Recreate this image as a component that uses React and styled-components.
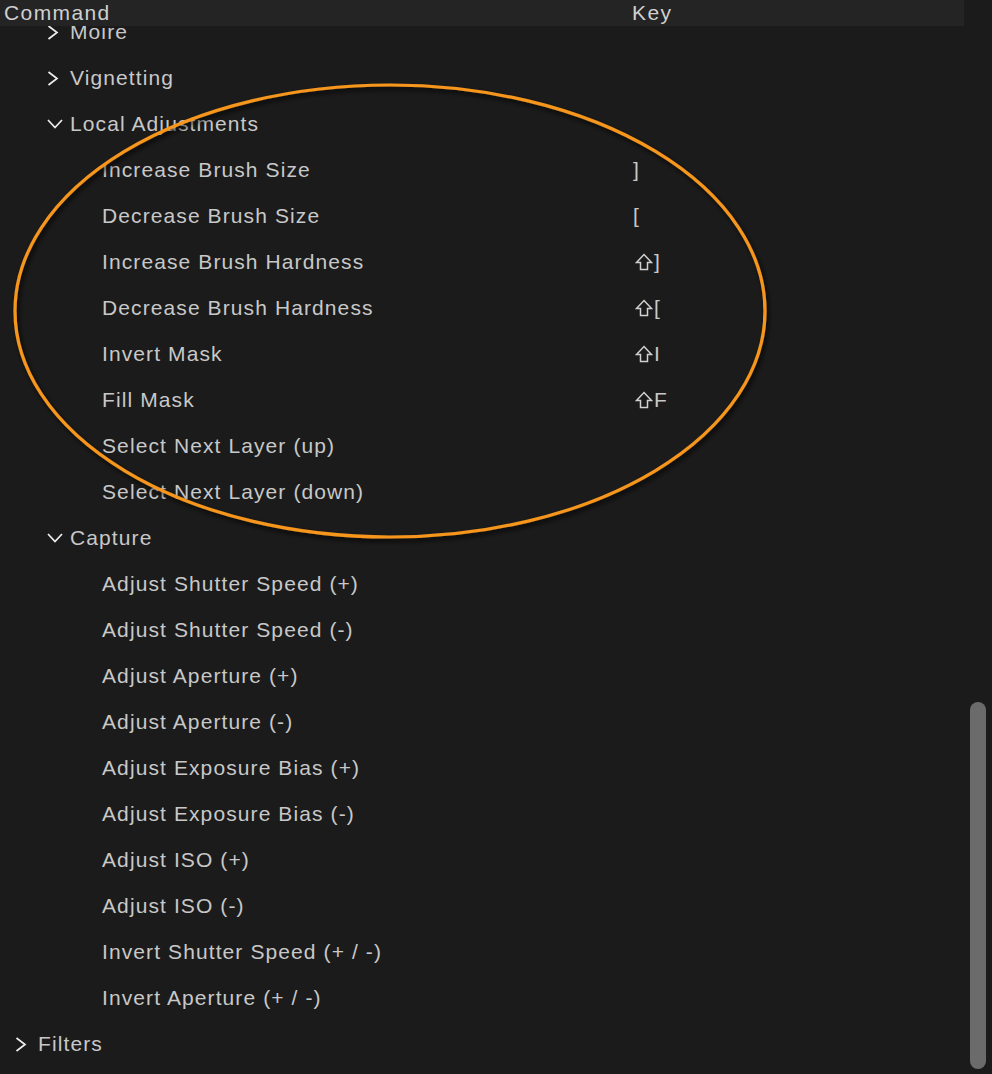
import styled, { createGlobalStyle } from 'styled-components';

const GlobalStyle = createGlobalStyle`
  html, body {
    margin: 0;
    padding: 0;
    background: #1b1b1b;
  }
  body {
    font-family: "Liberation Sans", Arial, sans-serif;
  }
`;

const Viewport = styled.div`
  position: relative;
  width: 992px;
  height: 1074px;
  overflow: hidden;
  background: #1b1b1b;
`;

// sticky column header, drawn over the scrolled list
const Header = styled.div`
  position: absolute;
  top: 0;
  left: 0;
  width: 964px;
  height: 26px;
  z-index: 2;
  display: grid;
  grid-template-columns: 632px 1fr;
  align-items: center;
  background: #242424;
  color: #d0d0d0;
  font-size: 21px;
  letter-spacing: 1.4px;
`;

const HeaderCell = styled.div`
  padding-left: ${(p) => p.pad || 0}px;
  line-height: 26px;
  margin-top: -1px;
`;

const List = styled.div`
  display: flex;
  flex-direction: column;
  padding-top: 9px;
`;

const Row = styled.div`
  height: 46px;
  display: grid;
  grid-template-columns: 632px 1fr;
  align-items: center;
  color: #c8c8c8;
  font-size: 21px;
  letter-spacing: 1.1px;
`;

const Label = styled.div`
  display: flex;
  align-items: center;
  padding-left: ${(p) => p.level * 32 + 38}px;
`;

const Chevron = styled.span`
  width: 23px;
  display: inline-flex;
  align-items: center;
  margin-left: -23px;
`;

const KeyCell = styled.div`
  display: flex;
  align-items: center;
  padding-left: 1px;
  letter-spacing: 0;
`;

const ScrollThumb = styled.div`
  position: absolute;
  right: 6px;
  top: 702px;
  width: 16px;
  height: 367px;
  border-radius: 8px;
  background: #6b6b6b;
`;

const Overlay = styled.svg`
  position: absolute;
  left: 0;
  top: 0;
  z-index: 3;
  pointer-events: none;
`;

const ShiftIcon = () => (
  <svg width="18" height="18" viewBox="0 0 18 18" style={{ marginLeft: 2, marginRight: 1 }}>
    <path
      d="M9 1.5 L16.5 9.5 H12.5 V16.5 H5.5 V9.5 H1.5 Z"
      fill="none"
      stroke="#d0d0d0"
      strokeWidth="1.5"
      strokeLinejoin="miter"
    />
  </svg>
);

const ChevronIcon = ({ open }) => (
  <Chevron>
    <svg width="16" height="15" viewBox="0 0 16 15">
      {open ? (
        <path d="M1 3 L8 10.5 L15 3" fill="none" stroke="#ededed" strokeWidth="1.7" />
      ) : (
        <path d="M1.5 1 L10 7.5 L1.5 14" fill="none" stroke="#ededed" strokeWidth="1.7" />
      )}
    </svg>
  </Chevron>
);

const rows = [
  { label: 'Moire', level: 1, group: true },
  { label: 'Vignetting', level: 1, group: true },
  { label: 'Local Adjustments', level: 1, group: true, open: true },
  { label: 'Increase Brush Size', level: 2, key: ']' },
  { label: 'Decrease Brush Size', level: 2, key: '[' },
  { label: 'Increase Brush Hardness', level: 2, key: ']', shift: true },
  { label: 'Decrease Brush Hardness', level: 2, key: '[', shift: true },
  { label: 'Invert Mask', level: 2, key: 'I', shift: true },
  { label: 'Fill Mask', level: 2, key: 'F', shift: true },
  { label: 'Select Next Layer (up)', level: 2 },
  { label: 'Select Next Layer (down)', level: 2 },
  { label: 'Capture', level: 1, group: true, open: true },
  { label: 'Adjust Shutter Speed (+)', level: 2 },
  { label: 'Adjust Shutter Speed (-)', level: 2 },
  { label: 'Adjust Aperture (+)', level: 2 },
  { label: 'Adjust Aperture (-)', level: 2 },
  { label: 'Adjust Exposure Bias (+)', level: 2 },
  { label: 'Adjust Exposure Bias (-)', level: 2 },
  { label: 'Adjust ISO (+)', level: 2 },
  { label: 'Adjust ISO (-)', level: 2 },
  { label: 'Invert Shutter Speed (+ / -)', level: 2 },
  { label: 'Invert Aperture (+ / -)', level: 2 },
  { label: 'Filters', level: 0, group: true },
];

export default function App() {
  return (
    <Viewport>
      <GlobalStyle />
      <Header>
        <HeaderCell pad={4}>Command</HeaderCell>
        <HeaderCell pad={0}>Key</HeaderCell>
      </Header>
      <List>
        {rows.map((r) => (
          <Row key={r.label}>
            <Label level={r.level}>
              {r.group && <ChevronIcon open={r.open} />}
              {r.label}
            </Label>
            <KeyCell>
              {r.shift && <ShiftIcon />}
              {r.key}
            </KeyCell>
          </Row>
        ))}
      </List>
      <ScrollThumb />
      <Overlay width="992" height="1074">
        <defs>
          <filter id="shadow" x="-10%" y="-10%" width="120%" height="120%">
            <feDropShadow dx="2" dy="3" stdDeviation="2.5" floodColor="#000" floodOpacity="0.85" />
          </filter>
        </defs>
        <ellipse
          cx="390"
          cy="311"
          rx="375"
          ry="226"
          fill="none"
          stroke="#f7961e"
          strokeWidth="3.2"
          filter="url(#shadow)"
        />
      </Overlay>
    </Viewport>
  );
}
